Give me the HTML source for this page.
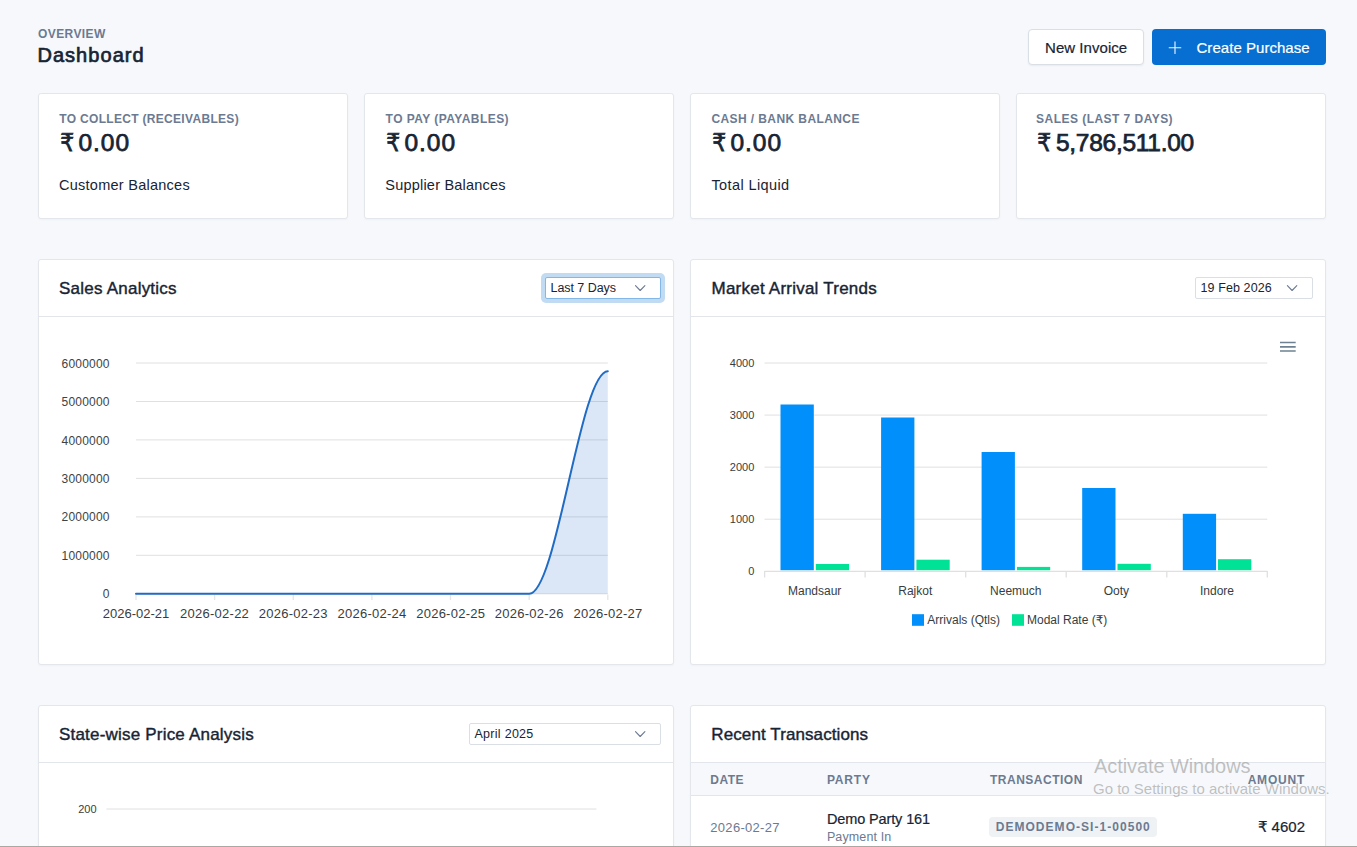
<!DOCTYPE html>
<html lang="en">
<head>
<meta charset="utf-8">
<title>Dashboard</title>
<style>
*{box-sizing:border-box;margin:0;padding:0}
html,body{width:1357px;height:847px;overflow:hidden;background:#f6f8fb}
body{font-family:"Liberation Sans","DejaVu Sans",sans-serif;color:#182433;position:relative;font-size:14px}
#root{position:absolute;left:0;top:0;width:1357px;height:847px;overflow:hidden;background:#f6f8fb}
.abs{position:absolute;white-space:nowrap}
.card{position:absolute;background:#fff;border:1px solid #e3e7ec;border-radius:3px;box-shadow:0 1px 2px rgba(24,36,51,.03)}
.sub{font-size:12px;font-weight:700;letter-spacing:.4px;color:#6c7a91;text-transform:uppercase;line-height:16px}
.big{font-size:24.5px;font-weight:400;line-height:30px;color:#182433;-webkit-text-stroke:.75px #182433}
.ru{display:inline-block;transform:scaleX(.89);transform-origin:70% 50%}
.desc{font-size:14.5px;line-height:20px;color:#182433}
.ctitle{font-size:17px;line-height:24px;color:#182433;-webkit-text-stroke:.4px #182433}
.hline{position:absolute;left:0;right:0;height:1px;background:#e2e6eb}
.sel{position:absolute;height:22px;border:1px solid #dadfe5;border-radius:2px;background:#fff;font-size:12.5px;line-height:20.6px;padding-left:4.5px;color:#182433;white-space:nowrap}
svg{position:absolute;overflow:visible;left:0;top:0}
svg text{font-family:"Liberation Sans","DejaVu Sans",sans-serif}
.ax{font-size:13px;fill:#373d3f;letter-spacing:.25px}
.ay{font-size:12px;fill:#3d4345;letter-spacing:.2px}
.bx{font-size:12px;fill:#373d3f}
.by{font-size:11px;fill:#373d3f}
.th{position:absolute;font-size:12px;font-weight:700;letter-spacing:.5px;color:#6c7a91;text-transform:uppercase;line-height:16px;white-space:nowrap}
</style>
</head>
<body>
<div id="root">

<!-- header -->
<div class="abs sub" id="t_over" style="left:38px;top:26px;">Overview</div>
<div class="abs" id="t_dash" style="left:37.4px;top:41px;font-size:20px;font-weight:400;line-height:28px;letter-spacing:1.05px;-webkit-text-stroke:.7px #182433;">Dashboard</div>

<div class="abs" style="left:1028px;top:29px;width:116px;height:36px;border:1px solid #dadfe5;border-radius:4px;background:#fff;box-shadow:0 1px 2px rgba(24,36,51,.06);"></div>
<div class="abs" id="t_newinv" style="left:1045px;top:38px;font-size:15px;line-height:20px;color:#182433;-webkit-text-stroke:.2px #182433;letter-spacing:.05px;">New Invoice</div>
<div class="abs" style="left:1152px;top:29px;width:174px;height:36px;border-radius:4px;background:#066fd1;"></div>
<svg width="1357" height="847" style="pointer-events:none"><path d="M1175 41.9v11.6M1169.2 47.7h11.6" stroke="#fff" stroke-opacity=".92" stroke-width="1.15" fill="none" stroke-linecap="round"/></svg>
<div class="abs" id="t_create" style="left:1196.5px;top:38px;font-size:15px;line-height:20px;color:#fff;-webkit-text-stroke:.2px #fff;letter-spacing:.04px;">Create Purchase</div>

<!-- stat cards -->
<div class="card" style="left:38px;top:93px;width:310px;height:126px;"></div>
<div class="card" style="left:364px;top:93px;width:310px;height:126px;"></div>
<div class="card" style="left:690px;top:93px;width:310px;height:126px;"></div>
<div class="card" style="left:1016px;top:93px;width:310px;height:126px;"></div>

<div class="abs sub" id="t_s1" style="left:59.3px;top:111px;letter-spacing:.31px;">To Collect (Receivables)</div>
<div class="abs big" id="t_b1" style="left:58.5px;top:128px;letter-spacing:.93px;word-spacing:-4.2px;"><span class="ru">₹</span> 0.00</div>
<div class="abs desc" id="t_d1" style="left:59px;top:175px;letter-spacing:.26px;">Customer Balances</div>

<div class="abs sub" id="t_s2" style="left:385.6px;top:111px;letter-spacing:.45px;">To Pay (Payables)</div>
<div class="abs big" id="t_b2" style="left:384.5px;top:128px;letter-spacing:.93px;word-spacing:-4.2px;"><span class="ru">₹</span> 0.00</div>
<div class="abs desc" id="t_d2" style="left:385.3px;top:175px;letter-spacing:.21px;">Supplier Balances</div>

<div class="abs sub" id="t_s3" style="left:711.4px;top:111px;letter-spacing:.41px;">Cash / Bank Balance</div>
<div class="abs big" id="t_b3" style="left:710.5px;top:128px;letter-spacing:.93px;word-spacing:-4.2px;"><span class="ru">₹</span> 0.00</div>
<div class="abs desc" id="t_d3" style="left:711.4px;top:175px;letter-spacing:.40px;">Total Liquid</div>

<div class="abs sub" id="t_s4" style="left:1036.1px;top:111px;letter-spacing:.46px;">Sales (Last 7 Days)</div>
<div class="abs big" id="t_b4" style="left:1036.3px;top:128px;letter-spacing:-.27px;word-spacing:-2.2px;"><span class="ru">₹</span> 5,786,511.00</div>

<!-- chart cards -->
<div class="card" style="left:38px;top:259px;width:636px;height:406px;"><div class="hline" style="top:56px"></div></div>
<div class="card" style="left:690px;top:259px;width:636px;height:406px;"><div class="hline" style="top:56px"></div></div>
<div class="card" style="left:38px;top:705px;width:636px;height:200px;"><div class="hline" style="top:56px"></div></div>
<div class="card" style="left:690px;top:705px;width:636px;height:200px;">
  <div class="hline" style="top:56px"></div>
  <div style="position:absolute;left:0;right:0;top:57px;height:32px;background:#f6f8fb"></div>
  <div class="hline" style="top:89px"></div>
</div>

<div class="abs ctitle" id="t_c1" style="left:59px;top:277px;letter-spacing:.23px;">Sales Analytics</div>
<div class="abs ctitle" id="t_c2" style="left:711.5px;top:277px;letter-spacing:.23px;">Market Arrival Trends</div>
<div class="abs ctitle" id="t_c3" style="left:59px;top:723px;letter-spacing:.2px;">State-wise Price Analysis</div>
<div class="abs ctitle" id="t_c4" style="left:711.3px;top:723px;letter-spacing:.1px;">Recent Transactions</div>

<!-- selects -->
<div class="abs" style="left:541px;top:273px;width:124px;height:30px;border-radius:5px;background:#c1dbf3;"></div>
<div class="sel" id="t_sel1" style="left:545px;top:277px;width:116px;border-color:#83b7e8;letter-spacing:-.05px;">Last 7 Days</div>
<div class="sel" id="t_sel2" style="left:1195px;top:277px;width:118px;letter-spacing:.1px;">19 Feb 2026</div>
<div class="sel" id="t_sel3" style="left:469px;top:723px;width:192px;letter-spacing:.28px;">April 2025</div>

<!-- all chart graphics -->
<svg width="1357" height="847" id="charts">
  <!-- select chevrons -->
  <g fill="none" stroke="#6c7a91" stroke-width="1.1" stroke-linecap="round" stroke-linejoin="round">
    <path d="M635.5 285.6l4.7 4.9l4.7-4.9"/>
    <path d="M1287.4 285.6l4.7 4.9l4.7-4.9"/>
    <path d="M635.5 731.6l4.7 4.9l4.7-4.9"/>
  </g>

  <!-- SALES ANALYTICS -->
  <g stroke="#e0e0e0" stroke-width="1">
    <path d="M136 363H607.8M136 401.5H607.8M136 439.9H607.8M136 478.4H607.8M136 516.9H607.8M136 555.3H607.8M136 593.8H607.8"/>
  </g>
  <g stroke="#e6e6e6" stroke-width="1.3">
    <path d="M136 594.5v5.5M214.6 594.5v5.5M293.3 594.5v5.5M371.9 594.5v5.5M450.5 594.5v5.5M529.2 594.5v5.5M607.8 594.5v5.5"/>
  </g>
  <path d="M136 593.8H529.2C556.7 593.8 580.3 371.2 607.8 371.2V593.8Z" fill="#206bc4" fill-opacity=".16"/>
  <path d="M136 593.8H529.2C556.7 593.8 580.3 371.2 607.8 371.2" fill="none" stroke="#206bc4" stroke-width="2" stroke-linecap="round"/>
  <g class="ay" text-anchor="end">
    <text x="109.7" y="367.8">6000000</text>
    <text x="109.7" y="406.2">5000000</text>
    <text x="109.7" y="444.6">4000000</text>
    <text x="109.7" y="483">3000000</text>
    <text x="109.7" y="521.4">2000000</text>
    <text x="109.7" y="559.8">1000000</text>
    <text x="109.7" y="598.2">0</text>
  </g>
  <g class="ax" text-anchor="middle">
    <text x="136" y="617.9" style="letter-spacing:0">2026-02-21</text>
    <text x="214.6" y="617.9">2026-02-22</text>
    <text x="293.3" y="617.9">2026-02-23</text>
    <text x="372" y="617.9">2026-02-24</text>
    <text x="450.7" y="617.9">2026-02-25</text>
    <text x="529.3" y="617.9">2026-02-26</text>
    <text x="608" y="617.9">2026-02-27</text>
  </g>

  <!-- MARKET ARRIVAL -->
  <g stroke="#e0e0e0" stroke-width="1">
    <path d="M764.5 363H1267.3M764.5 415.07H1267.3M764.5 467.13H1267.3M764.5 519.2H1267.3"/>
  </g>
  <g stroke="#e0e0e0" stroke-width="1.3">
    <path d="M764.5 571.3H1267.3M764.6 571v6.5M865.1 571v6.5M965.7 571v6.5M1066.2 571v6.5M1166.8 571v6.5M1267.3 571v6.5"/>
  </g>
  <g fill="#008ffb">
    <rect x="780.5" y="404.5" width="33.3" height="165.7"/>
    <rect x="881.1" y="417.5" width="33.3" height="152.7"/>
    <rect x="981.6" y="452" width="33.3" height="118.2"/>
    <rect x="1082.2" y="488" width="33.3" height="82.2"/>
    <rect x="1182.8" y="513.8" width="33.3" height="56.4"/>
    <rect x="912" y="614.2" width="12" height="11.6"/>
  </g>
  <g fill="#00e396">
    <rect x="815.8" y="564" width="33.3" height="6.2"/>
    <rect x="916.4" y="559.7" width="33.3" height="10.5"/>
    <rect x="1016.9" y="566.9" width="33.3" height="3.3"/>
    <rect x="1117.5" y="563.8" width="33.3" height="6.4"/>
    <rect x="1218" y="559.2" width="33.3" height="11"/>
    <rect x="1012" y="614.2" width="12" height="11.6"/>
  </g>
  <g class="by" text-anchor="end">
    <text x="754.3" y="367">4000</text>
    <text x="754.3" y="419.1">3000</text>
    <text x="754.3" y="471.2">2000</text>
    <text x="754.3" y="523.2">1000</text>
    <text x="754.3" y="575.3">0</text>
  </g>
  <g class="bx" text-anchor="middle">
    <text x="814.7" y="595">Mandsaur</text>
    <text x="915.3" y="595">Rajkot</text>
    <text x="1015.8" y="595">Neemuch</text>
    <text x="1116.4" y="595">Ooty</text>
    <text x="1217" y="595">Indore</text>
  </g>
  <g class="bx">
    <text x="927.3" y="624">Arrivals (Qtls)</text>
    <text x="1027" y="624">Modal Rate (₹)</text>
  </g>
  <g stroke="#6e8192" stroke-width="1.7" shape-rendering="auto">
    <path d="M1280 342.5h15.7M1280 346.8h15.7M1280 351h15.7"/>
  </g>

  <!-- STATE-WISE -->
  <path d="M106.4 809H596.4" stroke="#e0e0e0" stroke-width="1"/>
  <text class="by" x="96.5" y="813" text-anchor="end">200</text>
</svg>

<!-- table -->
<div class="th" id="t_h1" style="left:710.3px;top:772px;">Date</div>
<div class="th" id="t_h2" style="left:826.9px;top:772px;letter-spacing:.83px;">Party</div>
<div class="th" id="t_h3" style="left:990px;top:772px;">Transaction</div>
<div class="th" id="t_h4" style="right:52px;top:772px;letter-spacing:.78px;">Amount</div>

<div class="abs" id="t_r1" style="left:710.3px;top:818px;font-size:13px;line-height:20px;color:#6c7a91;letter-spacing:.3px;">2026-02-27</div>
<div class="abs" id="t_r2" style="left:826.9px;top:809px;font-size:14.5px;line-height:20px;color:#182433;-webkit-text-stroke:.2px #182433;letter-spacing:-.12px;">Demo Party 161</div>
<div class="abs" id="t_r3" style="left:826.9px;top:828px;font-size:12.5px;line-height:18px;color:#6c7a91;letter-spacing:.12px;">Payment In</div>
<div class="abs" style="left:989px;top:817px;width:168px;height:20px;border-radius:4px;background:#eff2f5"></div>
<div class="abs" id="t_r4" style="left:995.7px;top:819px;font-size:12px;font-weight:700;line-height:16px;color:#6c7a91;letter-spacing:1.04px;">DEMODEMO-SI-1-00500</div>
<div class="abs" id="t_r5" style="right:52px;top:817px;font-size:15px;line-height:20px;color:#182433;-webkit-text-stroke:.2px #182433;">₹ 4602</div>

<!-- watermark -->
<div class="abs" id="t_w1" style="left:1094px;top:754px;font-size:20px;line-height:24px;color:rgba(120,120,120,.46);letter-spacing:-.09px;">Activate Windows</div>
<div class="abs" id="t_w2" style="left:1093px;top:778.5px;font-size:15px;line-height:20px;color:rgba(120,120,120,.46);">Go to Settings to activate Windows.</div>

<!-- bottom edge -->
<div style="position:absolute;left:0;top:846px;width:1357px;height:1px;background:#a9a8a3"></div>

</div>
</body>
</html>
